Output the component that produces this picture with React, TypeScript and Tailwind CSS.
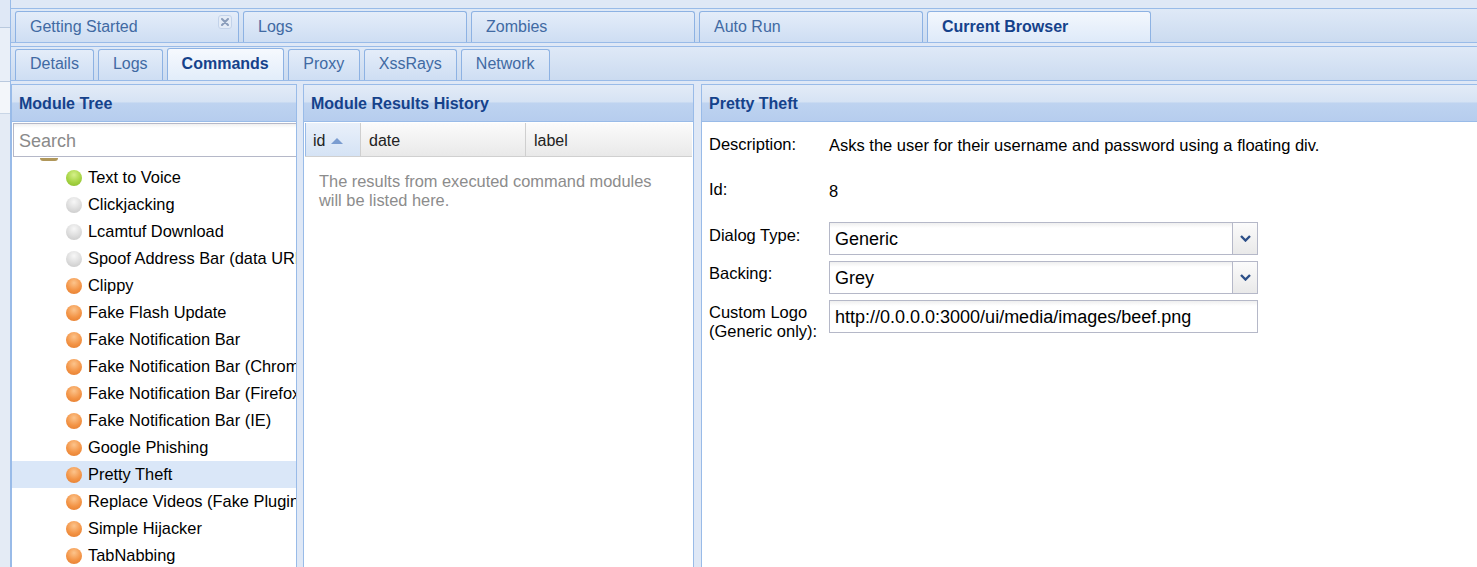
import React from "react";

type Item = { label: string; color: "green" | "gray" | "orange"; selected?: boolean };

const items: Item[] = [
  { label: "Text to Voice", color: "green" },
  { label: "Clickjacking", color: "gray" },
  { label: "Lcamtuf Download", color: "gray" },
  { label: "Spoof Address Bar (data URL)", color: "gray" },
  { label: "Clippy", color: "orange" },
  { label: "Fake Flash Update", color: "orange" },
  { label: "Fake Notification Bar", color: "orange" },
  { label: "Fake Notification Bar (Chrome)", color: "orange" },
  { label: "Fake Notification Bar (Firefox)", color: "orange" },
  { label: "Fake Notification Bar (IE)", color: "orange" },
  { label: "Google Phishing", color: "orange" },
  { label: "Pretty Theft", color: "orange", selected: true },
  { label: "Replace Videos (Fake Plugin)", color: "orange" },
  { label: "Simple Hijacker", color: "orange" },
  { label: "TabNabbing", color: "orange" },
];

function Dot({ color }: { color: Item["color"] }) {
  const cls =
    color === "green"
      ? "bg-[radial-gradient(circle_at_50%_30%,#d6f08a_0%,#a6d444_55%,#86b82a_100%)]"
      : color === "gray"
      ? "bg-[radial-gradient(circle_at_50%_30%,#f7f7f7_0%,#dcdcdc_55%,#c4c4c4_100%)]"
      : "bg-[radial-gradient(circle_at_50%_30%,#fcc48c_0%,#f39446_55%,#e2792a_100%)]";
  return <span className={`inline-block w-[16px] h-[16px] rounded-full shrink-0 ${cls}`} />;
}

function TopTab({ label, active, closable }: { label: string; active?: boolean; closable?: boolean }) {
  return (
    <div
      className={`h-[31px] w-[224px] shrink-0 rounded-t-[3px] border border-b-0 border-[#8db2e3] flex items-center justify-between pl-[14px] pr-[6px] text-[16px] ${
        active
          ? "bg-[linear-gradient(to_bottom,#f3f7fd,#deeaf9)] text-[#15428b] font-bold"
          : "bg-[linear-gradient(to_bottom,#e4edf9,#cedef3)] text-[#416aa3]"
      }`}
    >
      <span>{label}</span>
      {closable && (
        <span className="w-[14px] h-[14px] rounded-[3px] border border-[#c3d3ea] bg-[#e4ecf7] flex items-center justify-center -mt-[10px]">
          <svg width="8" height="8" viewBox="0 0 8 8">
            <path d="M1 1 L7 7 M7 1 L1 7" stroke="#8a9dbb" strokeWidth="2" strokeLinecap="round" />
          </svg>
        </span>
      )}
    </div>
  );
}

function SubTab({ label, active, wide }: { label: string; active?: boolean; wide?: boolean }) {
  return (
    <div
      className={`shrink-0 rounded-t-[3px] border border-b-0 border-[#8db2e3] flex items-center text-[16px] ${
        wide ? "w-[72px] justify-center" : "px-[14px]"
      } ${
        active
          ? "h-[32px] bg-[linear-gradient(to_bottom,#f6f9fe,#e2edfa)] text-[#15428b] font-bold"
          : "h-[31px] bg-[linear-gradient(to_bottom,#e4edf9,#cedef3)] text-[#416aa3]"
      }`}
    >
      <span className="-mt-[2px]">{label}</span>
    </div>
  );
}

function PanelHeader({ title }: { title: string }) {
  return (
    <div className="h-[37px] shrink-0 border-b border-[#99bbe8] bg-[linear-gradient(to_bottom,#e3ebf7_0%,#d6e3f4_47%,#bed3f0_50%,#b6cdee_100%)] flex items-center pl-[7px] pt-[2px] text-[16px] font-bold text-[#15428b]">
      {title}
    </div>
  );
}

function Select({ value }: { value: string }) {
  return (
    <div className="flex h-[33px] w-[429px]">
      <div className="flex-1 border border-[#b5b8c8] bg-[linear-gradient(to_bottom,#efefef_0px,#ffffff_5px,#ffffff_100%)] flex items-center pl-[5px] pt-[2px] text-[18px] text-black">
        {value}
      </div>
      <div className="w-[25px] border border-l-0 border-[#b5b8c8] bg-[linear-gradient(to_bottom,#fbfbfb,#e9e9e9)] flex items-center justify-center">
        <svg width="11" height="7" viewBox="0 0 11 7">
          <path d="M1 1 L5.5 5.5 L10 1" stroke="#2c4f88" strokeWidth="2.4" fill="none" />
        </svg>
      </div>
    </div>
  );
}

export default function App() {
  return (
    <div className="w-[1477px] h-[567px] overflow-hidden flex bg-[#dfe8f6] font-['Liberation_Sans',Arial,sans-serif]">
      {/* left sliver */}
      <div className="w-[10px] shrink-0 flex flex-col">
        <div className="h-[28px] bg-[#dfe8f6] border-b border-[#b9c9de]" />
        <div className="h-[54px] bg-[#e9eff8] border-b border-[#b9c9de]" />
        <div className="h-[32px] bg-[#f3f6fa] border-b border-[#c9d6e6]" />
        <div className="flex-1 bg-[#e4ebf5]" />
      </div>

      <div className="flex-1 min-w-0 flex flex-col border-l border-[#99bbe8]">
        {/* top tab strip */}
        <div className="mt-[8px] h-[35px] shrink-0 border-y border-[#99bbe8] bg-[linear-gradient(to_bottom,#dfe9f7,#cbdbf0)] flex items-end gap-[4px] pl-[4px]">
          <TopTab label="Getting Started" closable />
          <TopTab label="Logs" />
          <TopTab label="Zombies" />
          <TopTab label="Auto Run" />
          <TopTab label="Current Browser" active />
        </div>

        {/* sub tab strip */}
        <div className="mt-[3px] h-[35px] shrink-0 border-y border-[#99bbe8] bg-[linear-gradient(to_bottom,#dfe9f7,#cbdbf0)] flex items-end gap-[4px] pl-[4px]">
          <SubTab label="Details" />
          <SubTab label="Logs" />
          <SubTab label="Commands" active />
          <SubTab label="Proxy" wide />
          <SubTab label="XssRays" />
          <SubTab label="Network" />
        </div>

        {/* panels */}
        <div className="mt-[3px] flex-1 min-h-0 flex">
          {/* Module Tree */}
          <div className="w-[286px] shrink-0 border border-b-0 border-[#99bbe8] bg-white flex flex-col">
            <PanelHeader title="Module Tree" />
            <div className="pt-[1px] pl-[1px]">
              <div className="h-[34px] border border-[#b5b8c8] border-r-0 bg-[linear-gradient(to_bottom,#f0f0f0_0px,#ffffff_4px,#ffffff_100%)] flex items-center pl-[5px] pt-[3px] text-[18px] text-[#8a8a8a]">
                Search
              </div>
            </div>
            <div className="flex-1 min-h-0 overflow-hidden">
              <div className="h-[7px] relative">
                <div className="absolute left-[28px] top-[1px] w-[18px] h-[3px] rounded-b-[3px] bg-[#b0975a]" />
              </div>
              {items.map((it) => (
                <div
                  key={it.label}
                  className={`h-[27px] flex items-center gap-[6px] pl-[54px] whitespace-nowrap overflow-hidden text-[16.4px] text-black ${
                    it.selected ? "bg-[#dae7f8]" : ""
                  }`}
                >
                  <Dot color={it.color} />
                  <span>{it.label}</span>
                </div>
              ))}
            </div>
          </div>

          <div className="w-[6px] shrink-0" />

          {/* Module Results History */}
          <div className="w-[391px] shrink-0 border border-b-0 border-[#99bbe8] bg-white flex flex-col">
            <PanelHeader title="Module Results History" />
            <div className="pt-[1px] px-[1px]">
              <div className="h-[34px] flex text-[16px] text-[#222] border-b border-[#d0d0d0]">
                <div className="w-[56px] border-l border-[#99bbe8] bg-[linear-gradient(to_bottom,#e9f0fa,#d5e3f5)] border-r border-r-[#cfcfcf] flex items-center pl-[7px] pt-[2px] gap-[6px]">
                  <span>id</span>
                  <svg width="12" height="6" viewBox="0 0 12 6">
                    <path d="M0 6 L6 0 L12 6 Z" fill="#7a9cd0" />
                  </svg>
                </div>
                <div className="w-[165px] bg-[linear-gradient(to_bottom,#fbfbfb,#e9e9e9)] border-r border-[#cfcfcf] flex items-center pl-[8px] pt-[2px]">
                  date
                </div>
                <div className="flex-1 bg-[linear-gradient(to_bottom,#fbfbfb,#e9e9e9)] flex items-center pl-[8px] pt-[2px]">
                  label
                </div>
              </div>
            </div>
            <div className="pt-[15px] pl-[15px] text-[16.4px] leading-[19px] text-[#8c8c8c]">
              The results from executed command modules
              <br />
              will be listed here.
            </div>
          </div>

          <div className="w-[7px] shrink-0" />

          {/* Pretty Theft */}
          <div className="flex-1 min-w-0 border border-b-0 border-r-0 border-[#99bbe8] bg-white flex flex-col">
            <PanelHeader title="Pretty Theft" />
            <div className="pl-[7px] text-[16.5px] leading-[19px] text-black">
              <div className="mt-[13px] flex">
                <div className="w-[120px] shrink-0">Description:</div>
                <div className="pt-[1px]">Asks the user for their username and password using a floating div.</div>
              </div>
              <div className="mt-[25px] flex">
                <div className="w-[120px] shrink-0">Id:</div>
                <div className="pt-[2px]">8</div>
              </div>
              <div className="mt-[21px] flex items-start">
                <div className="w-[120px] shrink-0 pt-[4px]">Dialog Type:</div>
                <Select value="Generic" />
              </div>
              <div className="mt-[6px] flex items-start">
                <div className="w-[120px] shrink-0 pt-[3px]">Backing:</div>
                <Select value="Grey" />
              </div>
              <div className="mt-[6px] flex items-start">
                <div className="w-[120px] shrink-0 pt-[3px]">
                  Custom Logo
                  <br />
                  (Generic only):
                </div>
                <div className="h-[33px] w-[429px] border border-[#b5b8c8] bg-[linear-gradient(to_bottom,#efefef_0px,#ffffff_5px,#ffffff_100%)] flex items-center pl-[5px] pt-[2px] text-[18px] text-black">
                  http://0.0.0.0:3000/ui/media/images/beef.png
                </div>
              </div>
            </div>
          </div>
        </div>
      </div>
    </div>
  );
}
